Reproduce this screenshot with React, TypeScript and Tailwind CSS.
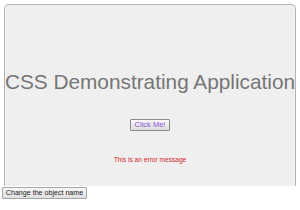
export default function App() {
  return (
    <div className="w-[300px] h-[210px] bg-white font-['Liberation_Sans',Arial,sans-serif]">
      {/* Main panel */}
      <div className="ml-[4px] mt-[4px] w-[292px] h-[182px] border border-[#b4b4b4] border-b-0 rounded-t-[5px] bg-[#efefef] flex flex-col items-center">
        <h1 className="mt-[65px] text-[20.8px] leading-[23px] text-[#767676] whitespace-nowrap">
          CSS Demonstrating Application
        </h1>
        <button
          className="mt-[26px] w-[40px] h-[12px] border border-[#8c8c8c] rounded-[1px] bg-gradient-to-b from-[#f8f8f8] to-[#dcdcdc] text-[7.5px] leading-[10px] text-[#8a52d6] whitespace-nowrap flex items-center justify-center"
          type="button"
        >
          Click Me!
        </button>
        <p className="mt-[25px] text-[6.6px] leading-[8px] text-[#d2262b] whitespace-nowrap">
          This is an error message
        </p>
      </div>

      {/* Footer button */}
      <button
        className="ml-[2px] mt-[1px] w-[85px] h-[12px] border border-[#a6a6a6] rounded-[1px] bg-gradient-to-b from-[#f6f6f6] to-[#e0e0e0] text-[7.1px] leading-[10px] text-[#222] whitespace-nowrap flex items-center justify-center"
        type="button"
      >
        Change the object name
      </button>
    </div>
  );
}
